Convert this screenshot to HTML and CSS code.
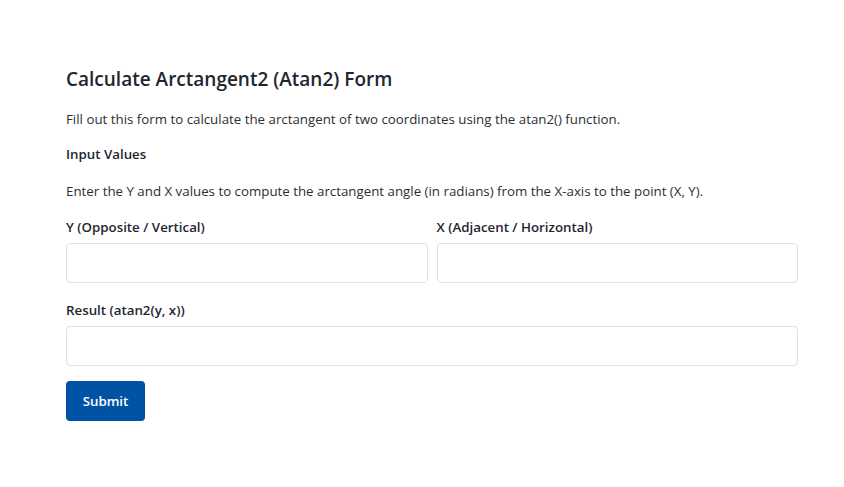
FILE: index.html
```html
<!DOCTYPE html>
<html lang="en">
<head>
    <meta charset="UTF-8">
    <meta name="viewport" content="width=device-width, initial-scale=1.0">
    <title>Calculate Arctangent2 (Atan2) Form</title>
    <link rel="stylesheet" href="styles.css">
</head>
<body>
    <div class="page">
        <form class="form">
            <h1 class="form-title">Calculate Arctangent2 (Atan2) Form</h1>
            <p class="form-intro">Fill out this form to calculate the arctangent of two coordinates using the atan2() function.</p>

            <h2 class="section-title">Input Values</h2>
            <p class="section-text">Enter the Y and X values to compute the arctangent angle (in radians) from the X-axis to the point (X, Y).</p>

            <div class="field-row">
                <div class="field">
                    <label for="y-value">Y (Opposite / Vertical)</label>
                    <input type="text" id="y-value">
                </div>
                <div class="field">
                    <label for="x-value">X (Adjacent / Horizontal)</label>
                    <input type="text" id="x-value">
                </div>
            </div>

            <div class="field">
                <label for="result">Result (atan2(y, x))</label>
                <input type="text" id="result">
            </div>

            <button type="submit" class="submit-btn">Submit</button>
        </form>
    </div>
</body>
</html>
```

FILE: styles.css
```css
* {
    margin: 0;
    padding: 0;
    box-sizing: border-box;
}

body {
    font-family: 'Open Sans', 'Noto Sans', sans-serif;
    background: white;
    color: #1f2328;
}

.page {
    padding: 66px 46px 40px 66px;
}

.form-title {
    font-size: 19px;
    font-weight: 600;
    color: #1e2630;
    line-height: 26px;
    margin-bottom: 18px;
}

.form-intro,
.section-text {
    font-size: 13.3px;
    line-height: 18px;
    color: #2b2f33;
}

.form-intro {
    margin-bottom: 17px;
}

.section-title {
    font-size: 13.3px;
    font-weight: 600;
    line-height: 18px;
    color: #1e2630;
    margin-bottom: 19px;
}

.section-text {
    margin-bottom: 18px;
}

.field-row {
    display: grid;
    grid-template-columns: 1fr 1fr;
    gap: 9px;
}

.field {
    display: flex;
    flex-direction: column;
    margin-bottom: 18px;
}

.field:last-of-type {
    margin-bottom: 15px;
}

.field label {
    font-size: 13.3px;
    font-weight: 600;
    line-height: 18px;
    color: #1e2630;
    margin-bottom: 7px;
}

.field input {
    height: 40px;
    border: 1px solid #dfe1e5;
    border-radius: 4px;
    font-family: inherit;
    font-size: 13px;
    padding: 0 10px;
}

.submit-btn {
    background: #0052a5;
    color: white;
    border: none;
    border-radius: 4px;
    width: 79px;
    height: 40px;
    font-family: inherit;
    font-size: 13.3px;
    font-weight: 600;
}
```
